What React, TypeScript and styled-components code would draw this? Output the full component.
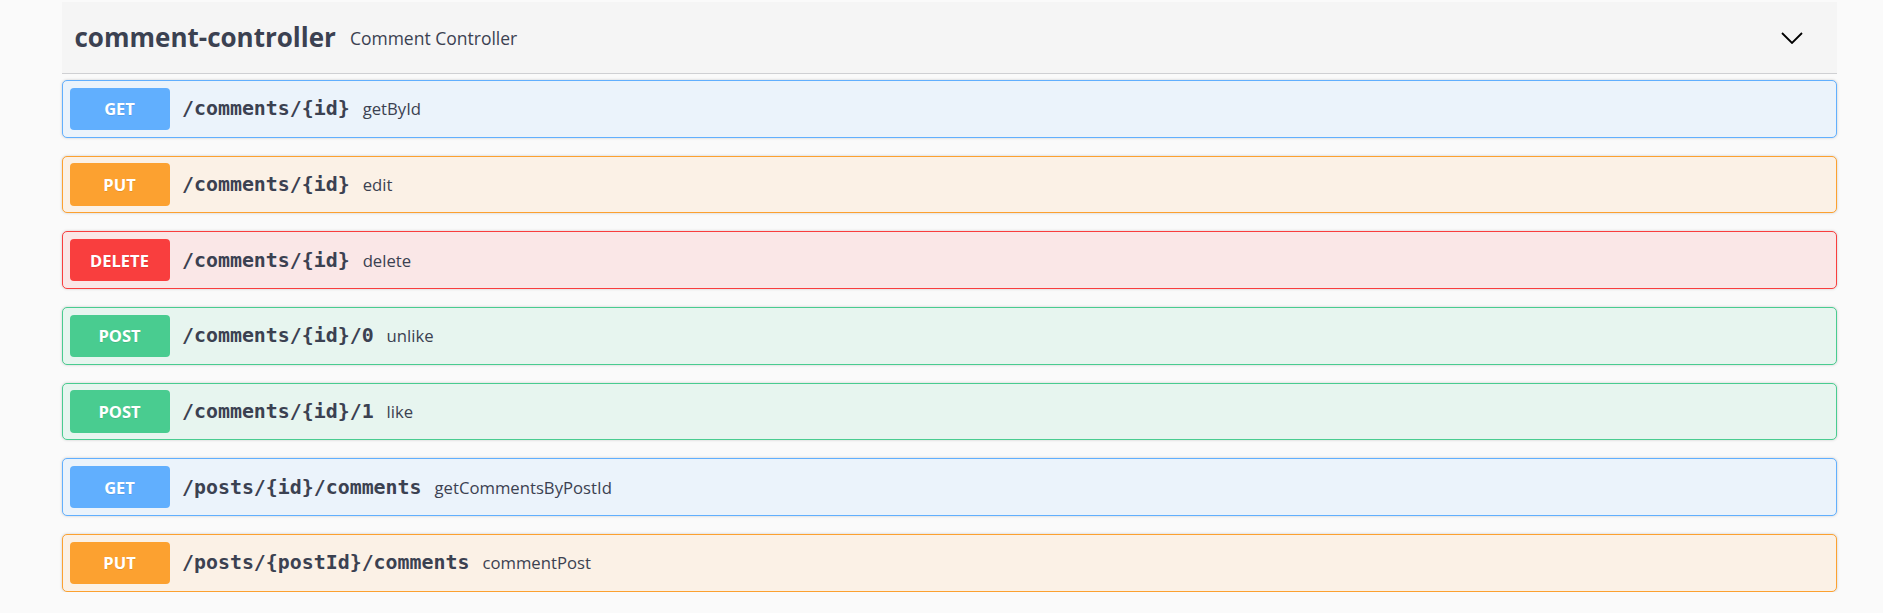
import React from "react";
import styled, { createGlobalStyle } from "styled-components";

const GlobalStyle = createGlobalStyle`
  html, body {
    margin: 0;
    padding: 0;
    background: #fafafa;
  }
  body {
    font-family: "Open Sans", sans-serif;
    color: #3b4151;
  }
`;

type Method = "GET" | "PUT" | "POST" | "DELETE";

const palette: Record<Method, { main: string; bg: string }> = {
  GET: { main: "#61affe", bg: "#ebf3fb" },
  PUT: { main: "#fca130", bg: "#fbf1e6" },
  POST: { main: "#49cc90", bg: "#e7f5ef" },
  DELETE: { main: "#f93e3e", bg: "#fae7e7" },
};

const Page = styled.div`
  padding: 2px 46px 0 62px;
`;

const Section = styled.section`
  display: flex;
  flex-direction: column;
`;

const TagHeader = styled.div`
  display: flex;
  align-items: center;
  height: 72px;
  box-sizing: border-box;
  padding: 0 34px 0 12.5px;
  background: #f5f5f5;
  border-bottom: 1px solid #cfd0d3;
  margin-bottom: 6px;
`;

const TagTitle = styled.h4`
  margin: 0;
  font-family: "Open Sans", sans-serif;
  font-weight: 700;
  font-size: 26px;
  line-height: 1;
  color: #3b4151;
  position: relative;
  top: -1px;
`;

const TagDesc = styled.small`
  margin-left: 14px;
  font-family: "Open Sans", sans-serif;
  font-size: 17.5px;
  font-weight: 400;
  color: #3b4151;
  flex: 1;
`;

const Chevron = styled.svg`
  width: 22px;
  height: 12px;
  display: block;
`;

const OpList = styled.div`
  display: flex;
  flex-direction: column;
  gap: 18.2px;
`;

const OpBlock = styled.div<{ $method: Method }>`
  display: flex;
  align-items: center;
  box-sizing: border-box;
  height: 57.5px;
  padding: 0 6.5px;
  border: 1.25px solid ${(p) => palette[p.$method].main};
  background: ${(p) => palette[p.$method].bg};
  border-radius: 5px;
  box-shadow: 0 0 3px rgba(0, 0, 0, 0.19);
`;

const MethodBadge = styled.span<{ $method: Method }>`
  display: flex;
  align-items: center;
  justify-content: center;
  width: 100px;
  height: 42.5px;
  border-radius: 4px;
  background: ${(p) => palette[p.$method].main};
  color: #fff;
  font-family: "Open Sans", sans-serif;
  font-weight: 700;
  font-size: 16.5px;
  text-shadow: 0 1px 0 rgba(0, 0, 0, 0.1);
`;

const Path = styled.span`
  margin-left: 12.5px;
  font-family: "DejaVu Sans Mono", "Liberation Mono", monospace;
  font-weight: 700;
  font-size: 19.9px;
  color: #3b4151;
  letter-spacing: 0;
`;

const Summary = styled.span`
  margin-left: 13px;
  font-family: "Open Sans", sans-serif;
  font-size: 16.7px;
  color: #3b4151;
`;

const ops: { method: Method; path: string; summary: string }[] = [
  { method: "GET", path: "/comments/{id}", summary: "getById" },
  { method: "PUT", path: "/comments/{id}", summary: "edit" },
  { method: "DELETE", path: "/comments/{id}", summary: "delete" },
  { method: "POST", path: "/comments/{id}/0", summary: "unlike" },
  { method: "POST", path: "/comments/{id}/1", summary: "like" },
  { method: "GET", path: "/posts/{id}/comments", summary: "getCommentsByPostId" },
  { method: "PUT", path: "/posts/{postId}/comments", summary: "commentPost" },
];

export default function App() {
  return (
    <>
      <GlobalStyle />
      <Page>
        <Section>
          <TagHeader>
            <TagTitle>comment-controller</TagTitle>
            <TagDesc>Comment Controller</TagDesc>
            <Chevron viewBox="0 0 22 12" aria-hidden="true">
              <polyline
                points="1,1 11,11 21,1"
                fill="none"
                stroke="#000"
                strokeWidth="1.8"
              />
            </Chevron>
          </TagHeader>
          <OpList>
            {ops.map((op, i) => (
              <OpBlock key={i} $method={op.method}>
                <MethodBadge $method={op.method}>{op.method}</MethodBadge>
                <Path>{op.path}</Path>
                <Summary>{op.summary}</Summary>
              </OpBlock>
            ))}
          </OpList>
        </Section>
      </Page>
    </>
  );
}
